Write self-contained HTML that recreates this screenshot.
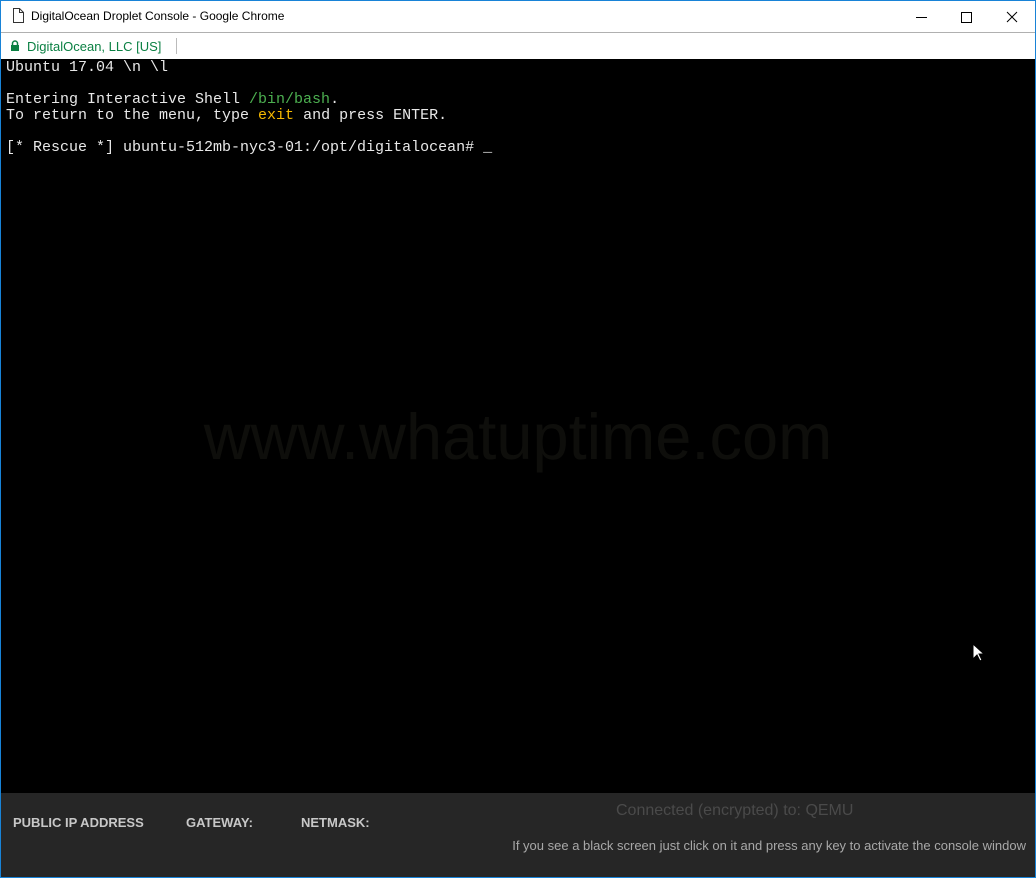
<!DOCTYPE html>
<html><head><style>
body{margin:0;width:1036px;height:878px;overflow:hidden;background:#1883d7;font-family:"Liberation Sans",sans-serif;position:relative}
.win{position:absolute;left:1px;top:1px;width:1034px;height:876px;background:#fff}
.title{position:absolute;left:0;top:0;width:1034px;height:30px;background:#fff}
.title span{position:absolute;left:30px;top:8px;font-size:12px;color:#000}
.addr{position:absolute;left:0;top:31px;width:1034px;height:27px;background:#fff;border-top:1px solid #b0b0b0}
.addr span{position:absolute;left:26px;top:6px;font-size:13px;color:#0b8043}
.term{position:absolute;left:0;top:58px;width:1034px;height:734px;background:#000;font-family:"Liberation Mono",monospace;font-size:15px;color:#e8e8e8;white-space:pre;line-height:16px}
.term .l{position:absolute;left:5px}
.wm{position:absolute;left:0;width:1034px;top:370px;text-align:center;font-family:"Liberation Sans",sans-serif;font-size:65px;color:#0e0e0b;white-space:nowrap}
.foot{position:absolute;left:0;top:792px;width:1034px;height:84px;background:#262626}
.lab{position:absolute;top:22px;font-size:13px;font-weight:bold;color:#c8c8c8}
</style></head><body>
<div class="win">
<div class="title">
<svg style="position:absolute;left:11px;top:7px" width="12" height="15"><path d="M1.5 .5h6l4 4v10h-10z M7.5 .5v4h4" fill="none" stroke="#333"/></svg>
<span>DigitalOcean Droplet Console - Google Chrome</span>
<svg style="position:absolute;left:913px;top:9px" width="110" height="14"><path d="M2 7.5h11" stroke="#000"/><path d="M47.5 2.5h10v10h-10z" fill="none" stroke="#000"/><path d="M93 2l10 10M103 2l-10 10" stroke="#000"/></svg>
</div>
<div class="addr">
<svg style="position:absolute;left:9px;top:7px" width="10" height="12"><path d="M2.5 5V3.5a2.5 2.5 0 0 1 5 0V5" fill="none" stroke="#0b8043" stroke-width="1.5"/><rect x="1" y="5" width="8" height="6" fill="#0b8043"/></svg>
<span>DigitalOcean, LLC [US]</span>
<div style="position:absolute;left:175px;top:5px;width:1px;height:16px;background:#bbb"></div>
</div>
<div class="term">
<div class="wm">www.whatuptime.com</div>
<div class="l" style="top:1px">Ubuntu 17.04 \n \l</div>
<div class="l" style="top:33px">Entering Interactive Shell <span style="color:#4caf50">/bin/bash</span>.</div>
<div class="l" style="top:49px">To return to the menu, type <span style="color:#f5b800">exit</span> and press ENTER.</div>
<div class="l" style="top:81px">[* Rescue *] ubuntu-512mb-nyc3-01:/opt/digitalocean# _</div>
<svg style="position:absolute;left:971px;top:584px" width="13" height="20"><path d="M1 1v15l4-4 3 6 2-1-3-6h5z" fill="#fff" stroke="#000"/></svg>
</div>
<div class="foot">
<div class="lab" style="left:12px">PUBLIC IP ADDRESS</div>
<div class="lab" style="left:185px">GATEWAY:</div>
<div class="lab" style="left:300px">NETMASK:</div>
<div style="position:absolute;left:615px;top:9px;font-size:16px;color:#4a4a4a">Connected (encrypted) to: QEMU</div>
<div style="position:absolute;right:9px;top:45px;font-size:13px;color:#a8a8a8">If you see a black screen just click on it and press any key to activate the console window</div>
</div>
</div>
</body></html>
